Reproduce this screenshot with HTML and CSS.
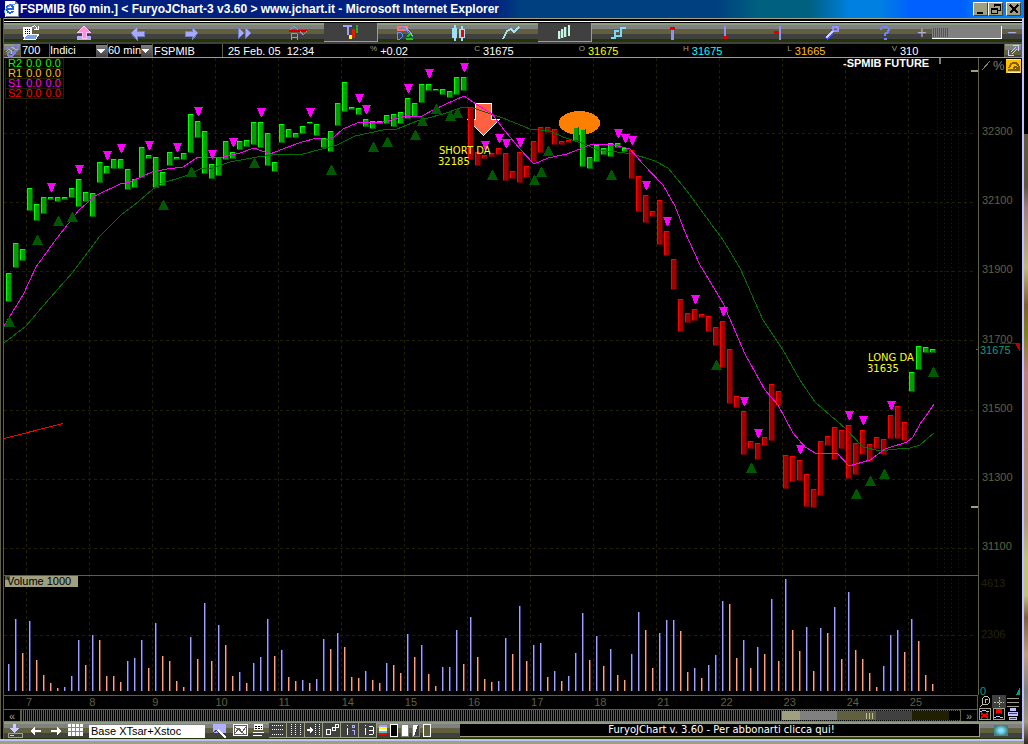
FILE: index.html
```html
<!DOCTYPE html>
<html lang="it">

<head>
	<meta charset="utf-8">
	<title>FSPMIB [60 min.] - FuryoJChart</title>
	<link rel="stylesheet" href="styles.css">
</head>

<body>
	<div class="window">
		<header class="titlebar">
			<svg width="16" height="16" viewBox="0 0 16 16"><path fill="#fff" d="M2 0h10l3 3v13H2z"/><path fill="#8080a0" d="M12 0l3 3h-3zM15 3h1v13H3v-1h12z"/><path fill="none" stroke="#2060e0" stroke-width="2" d="M4 8h6c0-5-6-5-6 0s5 4 6 2"/><path fill="none" stroke="#60a0f0" d="M1 12c0-4 7-9 11-9"/></svg>
			<h1>FSPMIB [60 min.] &lt; FuryoJChart-3 v3.60 &gt; www.jchart.it - Microsoft Internet Explorer</h1>
			<button class="win-btn" aria-label="Minimize"><svg width="10" height="10"><path d="M1 8h6v2H1z"/></svg></button>
			<button class="win-btn" aria-label="Restore"><svg width="10" height="10"><path d="M3 0h7v7H7V6h2V2H4v1H3zM0 4h7v6H0zM1 6v3h5V6z" fill-rule="evenodd"/></svg></button>
			<button class="win-btn close" aria-label="Close"><svg width="10" height="10"><path d="M1 1l8 8M9 1l-8 8" stroke="#000" stroke-width="2"/></svg></button>
		</header>

		<main class="applet">
			<nav class="toolbar">
				<div class="tools">
					<button aria-label="Open"><svg width="18" height="16"><path fill="#fff" d="M1 2h9v10H1z"/><path stroke="#000" stroke-dasharray="1 1" d="M3 4.500h6M3 6.500h6M3 8.500h6"/><path fill="#80a0e8" stroke="#fff" d="M2 14l3-5h12l-3 5z"/><path fill="none" stroke="#fff" d="M9 3c2-3 5-3 6 1m-3 0h4V1"/></svg></button>
					<button aria-label="Upload"><svg width="16" height="16"><path fill="#b0b0ff" d="M1 11h14v4H1z"/><path fill="#ff90d8" stroke="#ffc0ff" d="M8 1l6 6h-4v6H6V7H2z"/></svg></button>
					<button aria-label="Back"><svg width="16" height="16"><path fill="#a8a8ff" stroke="#7080d0" d="M1 8l6-6v4h7v5H7v4z"/></svg></button>
					<button aria-label="Forward"><svg width="16" height="16"><path fill="#a8a8ff" stroke="#7080d0" d="M15 8L9 2v4H2v5h7v4z"/></svg></button>
					<button aria-label="Last"><svg width="16" height="16"><path fill="#a8a8ff" stroke="#7080d0" d="M2 2l6 6-6 6zM9 2l6 6-6 6z"/></svg></button>
					<button aria-label="Alert"><svg width="20" height="16"><path fill="none" stroke="#80a0e0" d="M2 5l4-4 4 4M3 15V9l2-1h2l2 1v6M3 12h6"/><path fill="#d00000" d="M1 5h18v2H1z"/><path fill="none" stroke="#b080c0" d="M12 6l3 4 4-4"/></svg></button>
					<button class="active" aria-label="Text"><svg width="18" height="16"><path fill="none" stroke="#a0a0ff" stroke-width="2" d="M1 2h9M6 2v9"/><path fill="#ff0" d="M7 11h3v4H7z"/><path fill="#e02000" d="M10 5h3v9h-3z"/><path fill="#20b020" d="M14 1h2v8h-2z"/></svg></button>
					<button aria-label="Draw"><svg width="18" height="16"><path fill="none" stroke="#ff7070" stroke-width="2" d="M2 5V2h9v3z"/><path fill="none" stroke="#6090ff" d="M1 7h3l2 2v3l-2 2H1zM6 1l11 11"/><path stroke="#b0b0c0" d="M9 1l8 10"/><path fill="none" stroke="#20c020" stroke-width="2" d="M10 14h7m-6-2l3-3"/></svg></button>
					<button aria-label="Candles"><svg width="16" height="18"><path fill="#a0e0f0" d="M4 1h2v16H4zM2 4h5v10H2zM11 2h2v15h-2zM9 5h6v9H9z"/><path fill="#f00000" d="M11 6h3v7h-3z"/></svg></button>
					<button aria-label="Line"><svg width="18" height="16"><path fill="none" stroke="#a8e0f0" stroke-width="2" d="M1 14l4-8 4-2 3 3 5-5"/></svg></button>
					<button class="active" aria-label="Bars"><svg width="16" height="16"><path fill="#d0f0e0" d="M2 7h2v8H2zM5 5h2v9H5zM8 3h2v10H8zM12 1h2v11h-2z"/><path fill="#508070" d="M4 7h1v8H4zM7 5h1v9H7zM10 3h1v10h-1z"/></svg></button>
					<button aria-label="Steps"><svg width="16" height="16"><path fill="none" stroke="#80d8f8" stroke-width="2" d="M1 13h4V6h4M6 11h5V3h5"/></svg></button>
					<button aria-label="High"><svg width="12" height="16"><path fill="#9090f0" d="M5 5h3v10H5z"/><path fill="#e00000" d="M4 2h5v3H4z"/></svg></button>
					<button aria-label="Low"><svg width="12" height="16"><path fill="#9090f0" d="M5 1h2v10H5z"/><path fill="#e00000" d="M4 11h5v3H4z"/></svg></button>
					<button aria-label="Close mark"><svg width="12" height="16"><path fill="#9090f0" d="M7 1h2v14H7z"/><path fill="#e00000" d="M2 6h5v3H2z"/></svg></button>
					<button aria-label="Options"><svg width="16" height="16"><path stroke="#4050ff" stroke-width="4" d="M2 14l7-7"/><path stroke="#d0d0ff" stroke-width="2" d="M2 13l7-7"/><path fill="none" stroke="#9090ff" stroke-width="2" d="M9 6V2h5v4h-4"/></svg></button>
					<button aria-label="Help"><svg width="12" height="16"><path fill="none" stroke="#7080ff" stroke-width="2" d="M2 5V3l2-1h4l2 2-1 3-3 2v2M5 14h3"/></svg></button>
				</div>
				<button class="step" aria-label="Zoom in">+</button>
				<div class="zoom-track"><i></i></div>
				<button class="step" aria-label="Zoom out">−</button>
			</nav>

			<div class="quote-row">
				<button class="knot" aria-label="Link"><svg width="16" height="14"><path fill="none" stroke="#8080d0" stroke-width="2" d="M2 5c4-5 4 8 8 4s-4-4 0-7 5 3 2 5-9-1-8 3 5 3 7-1"/><path fill="none" stroke="#a0c0a0" d="M2 8c3-5 7-1 5 2M7 3c4 0 3 4 7 2"/></svg></button>
				<input class="bars-input" aria-label="Barre" value="700">
				<select class="kind" aria-label="Mercato"><option>Indici</option></select>
				<select class="frame" aria-label="Periodo"><option>60 min</option></select>
				<span class="symbol">FSPMIB</span>
				<span class="date">25 Feb. 05&nbsp; 12:34</span>
				<div class="quotes">
					<span><small>%</small>+0.02</span>
					<span><small>C</small>31675</span>
					<span class="open"><small>O</small>31675</span>
					<span class="high"><small>H</small>31675</span>
					<span class="low"><small>L</small>31665</span>
					<span><small>V</small>310</span>
				</div>
				<button class="knot" aria-label="Detach"><svg width="13" height="13"><path fill="none" stroke="#d0d0ff" d="M1.500 6v5.500H7M6 1.500h5.500V7M4 8l5-5M5 10l5-5"/></svg></button>
			</div>

			<section class="plot">
				<svg id="chart" viewBox="4 58 1018 637"></svg>
				<table class="pivots">
					<tr class="r2"><th>R2</th><td>0.0</td><td>0.0</td></tr>
					<tr class="r1"><th>R1</th><td>0.0</td><td>0.0</td></tr>
					<tr class="s1"><th>S1</th><td>0.0</td><td>0.0</td></tr>
					<tr class="s2"><th>S2</th><td>0.0</td><td>0.0</td></tr>
				</table>
				<button class="undo" aria-label="Undo"><svg width="14" height="12"><path fill="none" stroke="#806000" stroke-width="2" d="M1 9h5M2 7c2-7 10-7 10 2H7c0-4 3-4 3-1"/><path stroke="#fff0a0" d="M1 11h12"/></svg></button>
			</section>

			<div class="footer">
				<div class="timeline">
					<div class="days">
						<span>7</span><span>8</span><span>9</span><span>10</span><span>11</span><span>14</span><span>15</span><span>16</span><span>17</span><span>18</span><span>21</span><span>22</span><span>23</span><span>24</span><span>25</span>
					</div>
					<div class="scroller">
						<button aria-label="Scroll left">«</button>
						<div class="track"><div class="thumb"><svg width="9" height="6"><path fill="#c0c0a0" d="M0 0h1v6H0zM3 0h1v6H3zM6 0h1v6H6z"/></svg></div></div>
						<button aria-label="Scroll right">»</button>
					</div>
				</div>
				<div class="corner">
					<button aria-label="Magnifier"><svg width="12" height="12"><path fill="none" stroke="#c0c0a0" d="M0.500 11.500l3-3h5l2-2v-4l-2-2h-3l-2 2v6M6.500 6.500v-3h2"/></svg></button>
					<button class="raised" aria-label="Crosshair"><svg width="12" height="12"><path stroke="#c0c0a0" stroke-dasharray="2 1" d="M6 1v10M1 6h10"/></svg></button>
					<button aria-label="List"><svg width="12" height="12"><path stroke="#a0a080" d="M0 2.500h12M0 6.500h12M0 10.500h12"/></svg></button>
					<button class="boxed" aria-label="Remove below"><svg width="10" height="10"><path fill="none" stroke="#c0c0ff" d="M0 2h2l2-1 2 1h3"/><path stroke="#f00" stroke-width="2" d="M1 4l7 5M8 4L1 9"/></svg></button>
					<button class="boxed" aria-label="Remove above"><svg width="10" height="10"><path stroke="#f00" stroke-width="2" d="M2 0l6 4M8 0L2 4"/><path fill="none" stroke="#c0c0ff" d="M0 8h2l2-1 2 1h3"/></svg></button>
					<button aria-label="Print"><svg width="12" height="12"><path fill="#c0c0ff" d="M3 0h6v3H3zM1 4h10v4H1zM2 9h8v3H2z"/><path fill="#404060" d="M2 5h8v1H2zM3 10h6v1H3z"/></svg></button>
				</div>
			</div>

			<div class="statusbar">
				<button aria-label="Save"><svg width="18" height="14"><path fill="none" stroke="#a0a080" d="M2 9v4h14V9H2"/><path fill="#d0d0ff" d="M7 0h3v4h3L8 9 3 4h4zM4 11h4v1H4z"/></svg></button>
				<button aria-label="Previous"><svg width="12" height="10"><path fill="#fff" d="M0 5l5-4v3h6v2H5v3z"/></svg></button>
				<button aria-label="Next"><svg width="12" height="10"><path fill="#fff" d="M11 5L6 1v3H0v2h6v3z"/></svg></button>
				<button aria-label="Grid"><svg width="16" height="13"><path fill="#fff" d="M0 0h15v12H0z"/><path stroke="#8080c0" d="M3.500 0v12M7.500 0v12M11.500 0v12M0 3.500h15M0 7.500h15"/></svg></button>
				<input class="template" aria-label="Modello" value="Base XTsar+Xstoc">
				<button aria-label="Edit"><svg width="16" height="14"><path fill="#b0b0ff" d="M1 0h13v9H1z"/><path stroke="#fff" stroke-width="2" d="M6 6l8 8"/><path stroke="#404060" d="M4 6l7 8M1 9l4-3"/></svg></button>
				<button aria-label="Chart"><svg width="16" height="13"><path fill="#fff" d="M0 0h15v12H0z"/><path fill="none" stroke="#606060" d="M2 9l4-5 3 4 4-5M2 3l9 7M1.500 1.500h12v9h-12z"/></svg></button>
				<button aria-label="Layers"><svg width="14" height="13"><path fill="#fff" d="M1 0h9v6H1zM0 8h11v1H0zM0 11h9v1H0z"/><path stroke="#000" stroke-dasharray="2 1" d="M2 2.500h7M2 4.500h7"/></svg></button>
				<button class="dark" aria-label="Rows"><svg width="14" height="12"><path stroke="#fff" stroke-dasharray="1 1" d="M1 1.500h12M1 5.500h12M1 10.500h12"/></svg></button>
				<button class="dark" aria-label="Columns"><svg width="14" height="12"><path stroke="#fff" stroke-dasharray="1 1" d="M2.500 0v12M6.500 0v12M11.500 0v12"/></svg></button>
				<button class="dark" aria-label="Shift"><svg width="14" height="12"><path fill="#fff" d="M0 5h3V3l3 3-3 3V7H0z"/><path stroke="#fff" stroke-dasharray="1 1" d="M8.500 0v12M12.500 0v12"/></svg></button>
				<button class="dark" aria-label="Links"><svg width="14" height="12"><path fill="none" stroke="#fff" d="M1.500 5.500h4v5h-4zM7.500 3.500h3v3h-3zM10.500 0.500h3v3h-3z"/></svg></button>
				<button class="dark" aria-label="Indicator one"><svg width="14" height="12"><path fill="#fff" d="M4 1h1v1H4zM4 4h1v7H4z"/><path fill="none" stroke="#b0b0ff" d="M9.500 1.500h2v2h-2zM9 6h2v5"/></svg></button>
				<button class="dark" aria-label="Indicator two"><svg width="14" height="12"><path fill="#fff" d="M4 1h1v1H4zM4 4h1v7H4zM8 2h4v1H8zM8 6h4v1H8zM8 10h4v1H8zM12 3h1v7h-1z"/></svg></button>
				<button aria-label="Colours"><i class="palette"></i></button>
				<button aria-label="Hollow"><i class="style"></i></button>
				<button aria-label="Filled"><i class="style filled"></i></button>
				<button aria-label="Half"><i class="style half"></i></button>
				<button aria-label="Clear"><i class="style clear"></i></button>
				<a class="banner" href="#">FuryoJChart v. 3.60 - Per abbonarti clicca qui!</a>
				<i class="globe"></i>
			</div>
		</main>
	</div>
	<div class="desktop"></div>

	<script src="chart.js"></script>
</body>

</html>
```

FILE: styles.css
```css
:root {
	--line: #60603f;
	--light: #a0a080;
	--bevel: linear-gradient(#8c9c80 0 2px, #808080 2px 6px, #60603f 6px 11px, #404040 11px 16px, #203800 16px);
}

* {
	box-sizing: border-box;
}

body {
	margin: 0;
	display: flex;
	min-height: 100vh;
	background: #000;
	color: #fff;
	font: 11px "Liberation Sans", Arial, sans-serif;
}

button {
	display: flex;
	align-items: center;
	justify-content: center;
	padding: 0;
	border: 0;
	background: none;
	color: inherit;
	font: inherit;
}

svg {
	display: block;
	flex: none;
	shape-rendering: crispEdges;
}

.window {
	flex: 1;
	min-width: 0;
	border-bottom: 3px solid var(--light);
}

.desktop {
	width: 4px;
	background: linear-gradient(#000 0 18%, #605840 18% 25%, #a08080 28%, #c0b880 36%, #806030 41%, #808020 45%, #c08080 50%, #b09880 70%, #c0c080 75% 80%, #806040 83%, #c0a080 88%, #808080 93%, #a09880 97%, #302820);
}

/* title bar */
.titlebar {
	display: flex;
	align-items: center;
	height: 18px;
	padding: 0 3px;
	background: linear-gradient(90deg, #000080, #002080 12% 48%, #004080 51% 70%, #006080 74% 79%, #0080e0 83% 86%, #0060ff 89% 94%, #0080ff 96%);
}

.titlebar h1 {
	flex: 1;
	margin: 0 0 0 1px;
	font: bold 12px/18px "Liberation Sans", Arial, sans-serif;
	white-space: nowrap;
}

.win-btn {
	width: 15px;
	height: 14px;
	background: #a0a080;
	border: 1px solid;
	border-color: #fff #404040 #404040 #fff;
}

.win-btn.close {
	margin-left: 3px;
}

.applet {
	border: solid #c0c0ff;
	border-width: 0 2px 2px 0;
	padding-left: 4px;
	background: linear-gradient(90deg, var(--line) 0 1px, #000 1px 3px, var(--line) 3px 4px, #000 4px);
}

/* top toolbar */
.toolbar {
	display: flex;
	align-items: center;
	height: 26px;
	padding-top: 5px;
	border-bottom: 2px solid #404040;
	background: linear-gradient(#a0a080 0 1px, #000 1px 3px, #fff 3px 4px, #000 4px 5px, transparent 5px), var(--bevel) 0 5px;
}

.tools {
	display: grid;
	grid-template-columns: repeat(17, 1fr);
	flex: 1;
}

.tools button {
	height: 19px;
}

.tools .active {
	background: #404040;
	border: 1px solid var(--light);
	border-width: 0 1px 1px 0;
}

.step {
	width: 20px;
	color: #b0b0e0;
	font-size: 16px;
	line-height: 16px;
}

.zoom-track {
	width: 70px;
	height: 13px;
	background: #808080;
	border: solid #fff;
	border-width: 0 1px 1px 0;
}

.zoom-track i {
	display: block;
	width: 16px;
	height: 9px;
	margin: 2px 1px;
	background: repeating-linear-gradient(90deg, #d02020 0 1px, #808080 1px 2px);
}

/* instrument and last prices */
.quote-row {
	display: flex;
	height: 14px;
	border-bottom: 1px solid var(--light);
	line-height: 14px;
	white-space: nowrap;
}

.quote-row > * {
	border: 0;
	border-right: 1px solid var(--line);
}

.quote-row input,
.quote-row select {
	background: #000;
	color: #fff;
	font: 11px/13px "Liberation Sans", Arial, sans-serif;
	height: 13px;
	padding: 0 1px;
	border-radius: 0;
}

.quote-row select {
	appearance: none;
	padding: 0;
	background: linear-gradient(45deg, transparent 50%, #fff 50%) no-repeat right 6px top 5px / 4px 4px, linear-gradient(-45deg, transparent 50%, #fff 50%) no-repeat right 2px top 5px / 4px 4px, linear-gradient(#808080, #404040) no-repeat right / 11px 12px, #000;
}

.knot {
	width: 17px;
	background: var(--bevel);
}

.quote-row .bars-input {
	width: 29px;
}

.kind {
	width: 58px;
}

.frame {
	width: 45px;
}

.symbol {
	width: 70px;
	padding-left: 1px;
}

.quote-row .date {
	width: 147px;
	padding-left: 5px;
	border: 0;
}

.quotes {
	flex: 1;
	display: grid;
	grid-template-columns: repeat(6, 1fr);
	padding-right: 8px;
}

.quotes span {
	display: flex;
	align-items: flex-start;
	gap: 3px;
}

.quotes small {
	color: var(--light);
	font-size: 8px;
	line-height: 10px;
}

.open { color: #ff0; }
.high { color: #0ff; }
.low { color: #ffc000; }

/* chart */
.plot {
	position: relative;
}

#chart {
	width: 100%;
	height: auto;
	overflow: visible;
}

#chart text {
	font: 11px "Liberation Sans", Arial, sans-serif;
}

#chart .price { fill: #60603f; }
#chart .faint { fill: #242408; }
#chart .note { fill: #ff0; font-family: "DejaVu Sans", sans-serif; font-size: 10px; }
#chart .last { fill: #00a080; }
#chart .name { fill: #fff; font-weight: bold; }
#chart .volume { fill: #000; }
#chart .percent { fill: #808070; font-size: 13px; }

.pivots {
	position: absolute;
	left: 1px;
	top: 0;
	width: 59px;
	border-collapse: collapse;
	line-height: 9px;
}

.pivots tr {
	border: 1px solid #202000;
}

.pivots th,
.pivots td {
	padding: 0 2px;
	font-weight: normal;
	text-align: left;
}

.r2 { color: #0f0; }
.r1 { color: #ffc000; }
.s1 { color: #f0f; }
.s2 { color: #f00; }

.undo {
	position: absolute;
	right: 1px;
	top: 1px;
	width: 15px;
	height: 14px;
	background: #ffc000;
	border-top: 1px solid #ff0;
}

/* dates, scroll bar, corner buttons */
.footer {
	display: flex;
	height: 26px;
}

.timeline {
	flex: 1;
	border: solid var(--line);
	border-width: 1px 1px 0 0;
}

.days {
	display: grid;
	grid-template-columns: repeat(15, 1fr);
	height: 13px;
	padding: 0 4px 0 22px;
	color: var(--line);
	line-height: 13px;
}

.scroller {
	display: flex;
	height: 12px;
	border-top: 1px solid var(--line);
	color: var(--light);
}

.scroller button {
	width: 16px;
}

.track {
	flex: 1;
	padding: 1px 0;
	display: flex;
	justify-content: flex-end;
	background: repeating-linear-gradient(90deg, var(--line) 0 1px, #000 1px 2px);
	border: solid var(--line);
	border-width: 0 1px;
}

.thumb {
	width: 19%;
	display: flex;
	align-items: center;
	justify-content: center;
	background: linear-gradient(90deg, #a0a080 0 10%, #808080 10% 31%, #60603f 31% 53%, #404040 53% 73%, #202000 73% 94%, #000 94%);
}

.corner {
	width: 44px;
	padding-right: 2px;
	display: grid;
	grid-template-columns: repeat(3, 1fr);
	grid-template-rows: 13px 12px;
}

.corner .raised {
	background: #404040;
}

.corner .boxed {
	border: 1px solid var(--light);
	margin: 0 1px;
}

/* bottom toolbar */
.statusbar {
	display: flex;
	align-items: center;
	height: 18px;
	border-top: 1px solid #808080;
	background: var(--bevel);
}

.statusbar > button {
	width: 18px;
	height: 15px;
	flex: none;
}

.statusbar > button:nth-child(-n+3) {
	width: 21px;
}

.statusbar .template {
	width: 116px;
	height: 13px;
	margin: 2px 4px 0;
	padding: 0 2px;
	border: 0;
	font: 11px/13px "Liberation Sans", Arial, sans-serif;
}

.statusbar > .template + button,
.statusbar > .template + button + button {
	width: 21px;
}

.statusbar .dark {
	background: #404040;
	border: 1px solid var(--light);
	border-width: 0 1px 1px 0;
}

.statusbar > button:nth-last-child(-n+7) {
	width: 11px;
}

.palette {
	width: 8px;
	height: 12px;
	background: linear-gradient(#a0a0ff 0 2px, #ff0 2px 4px, #fff 4px 6px, #60c0c0 6px 8px, #f00 8px 10px, #404040 10px);
}

.style {
	width: 8px;
	height: 13px;
	border: 1px solid #fff;
	background: #000;
}

.filled {
	background: #fff;
	border-color: #808080;
}

.half {
	background: linear-gradient(110deg, #fff 50%, #404040 50%);
	border-color: #808080;
}

.clear {
	background: var(--line);
}

.banner {
	flex: 1;
	height: 13px;
	margin-left: 28px;
	background: #000;
	border: solid var(--light);
	border-width: 0 1px 1px 0;
	color: #fff;
	font: 10px/11px "DejaVu Sans", sans-serif;
	padding-left: 4px;
	text-align: center;
	text-decoration: none;
}

.globe {
	width: 14px;
	height: 11px;
	margin: 0 14px;
	background: radial-gradient(#80e0ff 20%, #408080 70%);
}
```

FILE: chart.js
```js
// One entry per bar, every 7px from x=6: top and bottom
const bars = [
	[273,302],[243,268],[249,261],[188,211],[204,221],[197,214],[197,200],[197,202],[197,200],[188,198],
	[179,207],[192,202],[193,217],[162,183],[166,174],[159,169],[159,169],[169,190],[179,188],[147,178],
	[155,159],[157,188],[172,186],[152,166],[157,160],[153,160],[114,153],[121,138],[131,174],[164,179],
	[157,176],[141,160],[152,159],[141,150],[140,147],[122,145],[122,148],[133,166],[162,172],[124,143],
	[129,138],[133,138],[126,134],[122,124],[124,136],[138,148],[131,152],[103,126],[82,112],[107,110],
	[108,115],[119,127],[121,129],[121,124],[115,124],[114,127],[112,124],[98,119],[103,117],[84,103],
	[84,91],[89,91],[89,95],[91,98],[77,95],[77,91],[107,160],[152,166],[155,159],[153,157],
	[148,155],[153,181],[171,179],[152,183],[166,178],[141,162],[127,153],[127,133],[129,145],[141,145],
	[140,143],[127,141],[129,167],[157,169],[145,162],[148,155],[143,157],[143,148],[148,152],[150,179],
	[176,212],[195,223],[211,217],[200,245],[231,256],[259,290],[299,332],[313,323],[309,321],[314,318],
	[316,332],[327,346],[321,368],[349,404],[396,408],[411,455],[441,449],[443,460],[437,446],[384,441],
	[391,406],[455,489],[456,482],[460,481],[474,507],[489,508],[441,496],[436,446],[427,460],[430,449],
	[425,479],[443,475],[430,455],[444,462],[437,449],[439,455],[415,439],[406,439],[422,441],[372,392],
	[346,370],[347,353],[349,353]
];

// top of each volume bar, b = blue, o = orange
const volumes = ("b664 b619 o653 b621 o660 o675 o683 o688 b687 b676 b640 o665 b635 o640 o676 o676 o682 b661 b658 b640 " +
	"o668 b623 o656 o661 o681 o687 b637 o659 b603 o661 b625 o645 o676 b672 o683 b663 b657 b619 o656 b650 " +
	"o677 o681 b680 o683 b679 b639 o649 b633 o647 o677 o678 b671 o680 o683 b663 o665 o673 b634 o657 b645 " +
	"o674 o686 b667 b667 b630 o664 b617 o657 o679 o682 b681 b638 o654 b606 o661 b645 b643 o677 b671 o681 " +
	"b676 b653 b613 o660 b636 o666 b649 o675 o680 b654 b612 o630 o668 b633 b620 b620 o631 o672 b668 o678 " +
	"b665 b655 b601 o604 o658 b640 o668 b647 o654 b599 o661 b579 o630 o651 b627 o671 b628 o633 b607 o659 " +
	"b592 o650 o659 o673 o687 b666 b635 b630 o652 b619 o641 o675 o684").split(" ");

const sells = [
	[51,183],[79,165],[107,151],[121,144],[149,141],[177,143],[198,107],[212,150],[233,138],[261,108],
	[310,108],[359,94],[366,105],[408,84],[429,69],[464,63],[485,141],[499,134],[506,139],[520,138],
	[618,129],[625,134],[632,136],[646,181],[667,217],[695,295],[723,307],[744,397],[758,429],[800,445],
	[849,411],[863,416],[891,401]
];

const buys = [
	[9,317],[37,235],[58,216],[72,212],[163,200],[191,167],[254,158],[331,165],[373,142],[387,137],
	[415,130],[422,116],[436,104],[450,111],[457,108],[492,170],[534,175],[541,167],[548,146],[611,170],
	[716,360],[751,463],[856,489],[870,476],[884,469],[933,367]
];

const fast = "4,326 23,295 36,267 57,238 79,210 95,196 120,184 130,182 152,172 167,169 183,167 198,157 223,157 240,153 254,148 270,154 288,147 302,142 317,138 326,140 334,137 343,129 357,123 383,122 406,116 422,116 435,109 464,96 476,104 492,114 505,131 520,149 534,164 548,158 567,154 590,145 610,144 630,149 643,164 663,185 675,206 685,232 700,265 723,303 745,354 765,390 778,405 793,433 805,447 817,454 837,453 849,466 870,460 885,449 907,442 913,437 920,424 928,413 934,404";
const slow = "4,343 26,326 50,298 73,272 100,236 122,214 133,206 152,190 160,184 185,176 200,169 213,168 230,162 257,157 280,154 303,154 337,145 355,136 383,130 397,129 417,121 443,114 460,108 470,107 503,118 530,129 550,131 563,137 587,145 597,150 617,152 633,154 655,161 668,168 687,191 723,240 740,268 763,320 783,350 800,380 815,402 845,428 863,447 880,451 897,449 910,448 920,445 934,433";

let out = "";

function rect(x, y, w, h, fill) {
	out += `<rect x="${x}" y="${y}" width="${w}" height="${h}" fill="${fill}"/>`;
}

function line(points, stroke, extra = "") {
	out += `<polyline points="${points}" fill="none" stroke="${stroke}" ${extra}/>`;
}

function text(x, y, str, cls) {
	out += `<text x="${x}" y="${y}" class="${cls}">${str}</text>`;
}

// grid
for (let x = 26; x < 930; x += 63)
	line(`${x}.5,58 ${x}.5,695`, "#202000", 'stroke-dasharray="3 3"');
for (let x = 937; x < 970; x += 7)
	line(`${x}.5,71 ${x}.5,695`, "#202000", 'stroke-dasharray="1 3"');
[133, 202, 271, 340, 410, 479, 548, 635].forEach(y =>
	line(`4,${y}.5 974,${y}.5`, "#202000", 'stroke-dasharray="3 3"'));

// big short arrow and orange spot
out += '<ellipse cx="579.5" cy="123" rx="20.5" ry="12" fill="#ff8000"/>';
out += '<path d="M475.5 103.5h16v16h8l-16 16l-16-16h8z" fill="#ff6040" stroke="#fff"/>';

bars.forEach(([top, bottom], i) => {
	const x = 6 + i * 7;
	const red = (i > 65 && i < 81) || (i > 88 && i < 129);
	const h = bottom - top;
	rect(x, top, 6, h, red ? "#600000" : "#006000");
	rect(x, top, 5, h - 1, red ? "#ff0000" : "#00ff00");
	rect(x + 1, top + 1, 4, h - 2, red ? "#a00000" : "#00a000");
});

line(slow, "#007000");
line(fast, "#ff00ff");
line("4,438.5 63,423.5", "#ff0000");

sells.forEach(([x, y]) => {
	out += `<path d="M${x - 4} ${y}h9l-4 9h-1z" fill="#ff00ff"/>`;
});
buys.forEach(([x, y]) => {
	out += `<path d="M${x} ${y}h1l5 10h-11z" fill="#005800"/>`;
});

// volume
volumes.forEach((v, i) => {
	const x = 8 + i * 7;
	const y = +v.slice(1);
	const blue = v[0] == "b";
	rect(x, y, 1, 691 - y, blue ? "#a0a0ff" : "#ffa080");
	rect(x + 1, y, 1, 691 - y, blue ? "#404090" : "#804030");
});
line("4,575.5 978,575.5", "#60603f");
rect(5, 576, 73, 11, "#a0a080");
rect(5, 575, 5, 5, "#60603f");
text(7, 585, "Volume 1000", "volume");

// price axis
line("978.5,58 978.5,695", "#60603f");
for (let i = 0; i < 7; i++)
	text(982, 135 + Math.round(i * 69.2), 32300 - i * 200, "price");
text(981, 587, "4613", "faint");
text(981, 638, "2306", "faint");
text(980, 354, "31675", "last");
text(980, 695, "0", "last");
rect(971, 70, 7, 2, "#a0a080");
rect(971, 506, 7, 2, "#a0a080");
rect(976, 349, 2, 1, "#60603f");
rect(939, 58, 2, 6, "#808070");
line("1000,343.5 1020,343.5", "#a00000");
out += '<path d="M1015 343h5v9z" fill="#c00000"/><path d="M1020 687v8h-4z" fill="#00a080"/>';
line("982,70 990,61", "#808070");
text(993, 70, "%", "percent");

text(439, 154, "SHORT DA", "note");
text(438, 165, "32185", "note");
text(868, 361, "LONG DA", "note");
text(867, 372, "31635", "note");
text(843, 67, "-SPMIB FUTURE", "name");

document.getElementById("chart").innerHTML = out;
```
